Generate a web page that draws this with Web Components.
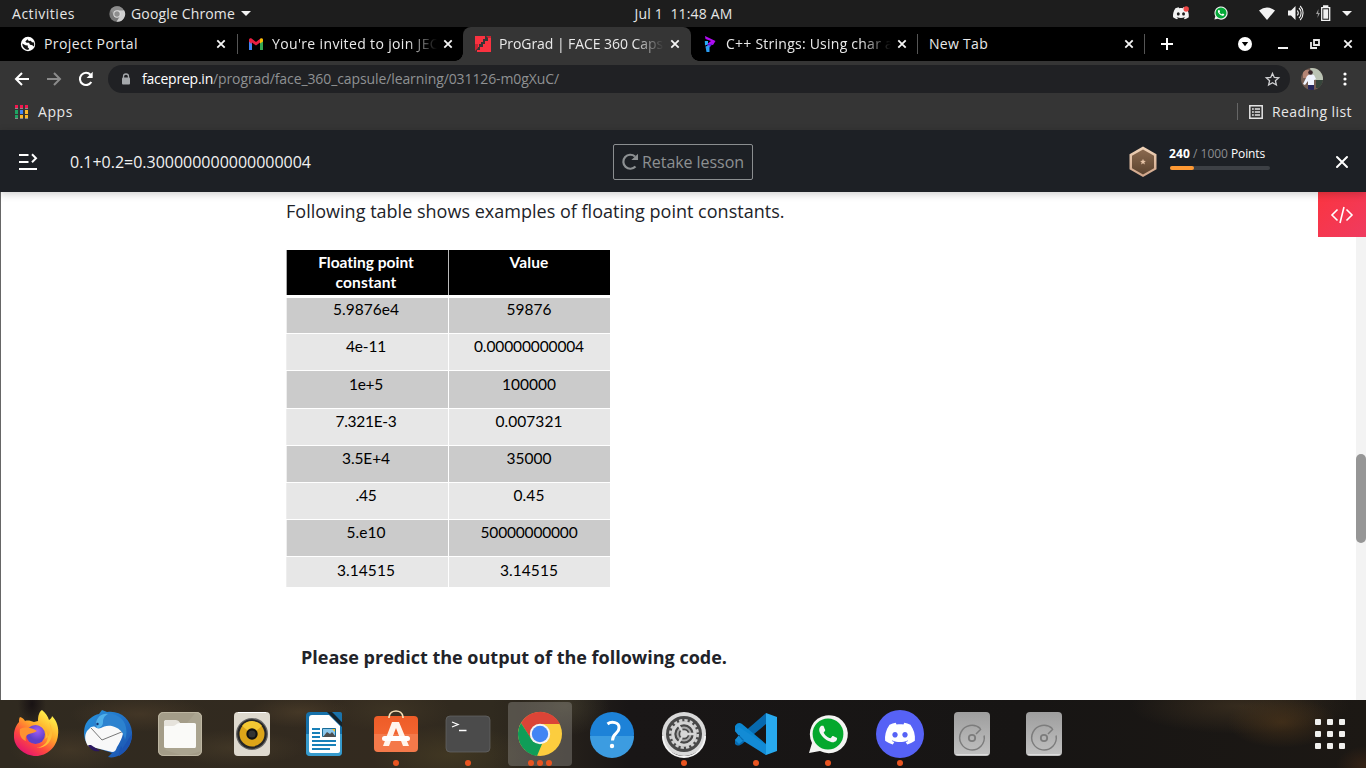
<!DOCTYPE html>
<html lang="en">
<head>
<meta charset="utf-8">
<title>ProGrad | FACE 360 Capsule</title>
<style>
html,body{margin:0;height:100%;overflow:hidden;background:#000}
</style>
</head>
<body>
<desktop-shell></desktop-shell>
<script>
const define = (name, html, setup) => {
  const tpl = document.createElement('template');
  tpl.innerHTML = html;
  customElements.define(name, class extends HTMLElement {
    connectedCallback() {
      if (this.shadowRoot) return;
      this.attachShadow({mode: 'open'}).appendChild(tpl.content.cloneNode(true));
      if (setup) setup(this, this.shadowRoot);
    }
  });
};

const DISCORD = 'M20.317 4.3698a19.7913 19.7913 0 00-4.8851-1.5152.0741.0741 0 00-.0785.0371c-.211.3753-.4447.8648-.6083 1.2495-1.8447-.2762-3.68-.2762-5.4868 0-.1636-.3933-.4058-.8742-.6177-1.2495a.077.077 0 00-.0785-.037 19.7363 19.7363 0 00-4.8852 1.515.0699.0699 0 00-.0321.0277C.5334 9.0458-.319 13.5799.0992 18.0578a.0824.0824 0 00.0312.0561c2.0528 1.5076 4.0413 2.4228 5.9929 3.0294a.0777.0777 0 00.0842-.0276c.4616-.6304.8731-1.2952 1.226-1.9942a.076.076 0 00-.0416-.1057c-.6528-.2476-1.2743-.5495-1.8722-.8923a.077.077 0 01-.0076-.1277c.1258-.0943.2517-.1923.3718-.2914a.0743.0743 0 01.0776-.0105c3.9278 1.7933 8.18 1.7933 12.0614 0a.0739.0739 0 01.0785.0095c.1202.099.246.1981.3728.2924a.077.077 0 01-.0066.1276 12.2986 12.2986 0 01-1.873.8914.0766.0766 0 00-.0407.1067c.3604.698.7719 1.3628 1.225 1.9932a.076.076 0 00.0842.0286c1.961-.6067 3.9495-1.5219 6.0023-3.0294a.077.077 0 00.0313-.0552c.5004-5.177-.8382-9.6739-3.5485-13.6604a.061.061 0 00-.0312-.0286zM8.02 15.3312c-1.1825 0-2.1569-1.0857-2.1569-2.419 0-1.3332.9555-2.4189 2.157-2.4189 1.2108 0 2.1757 1.0952 2.1568 2.419 0 1.3332-.9555 2.4189-2.1569 2.4189zm7.9748 0c-1.1825 0-2.1569-1.0857-2.1569-2.419 0-1.3332.9554-2.4189 2.1569-2.4189 1.2108 0 2.1757 1.0952 2.1568 2.419 0 1.3332-.946 2.4189-2.1568 2.4189Z';
const PHONE = 'M17.472 14.382c-.297-.149-1.758-.867-2.03-.967-.273-.099-.471-.148-.67.15-.197.297-.767.966-.94 1.164-.173.199-.347.223-.644.075-.297-.15-1.255-.463-2.39-1.475-.883-.788-1.48-1.761-1.653-2.059-.173-.297-.018-.458.13-.606.134-.133.298-.347.446-.52.149-.174.198-.298.298-.497.099-.198.05-.371-.025-.52-.075-.149-.669-1.612-.916-2.207-.242-.579-.487-.5-.669-.51-.173-.008-.371-.01-.57-.01-.198 0-.52.074-.792.372-.272.297-1.04 1.016-1.04 2.479 0 1.462 1.065 2.875 1.213 3.074.149.198 2.096 3.2 5.077 4.487.709.306 1.262.489 1.694.625.712.227 1.36.195 1.871.118.571-.085 1.758-.719 2.006-1.413.248-.694.248-1.289.173-1.413-.074-.124-.272-.198-.57-.347z';

/* small icons: [width, height, markup] */
const ICONS = {
  chromeGray: [16,16,'<circle cx="8" cy="8" r="7.7" fill="#777"/><path d="M8 4h7a7.7 7.7 0 0 1-7.5 11.7L11 10z" fill="#cfcfcf"/><path d="M1.5 4A7.7 7.7 0 0 1 15 4.6H8L5 10z" fill="#8c8c8c"/><circle cx="8" cy="8" r="3.7" fill="#ddd"/><circle cx="8" cy="8" r="2.7" fill="#8e8e8e"/>'],
  caret: [10,5,'<path d="M0 0h10L5 5z" fill="#f2f2f2"/>'],
  discord: [16,14,'<g transform="translate(0 -.6) scale(.66)"><path d="'+DISCORD+'" fill="#f2f2f2"/></g><circle cx="13.2" cy="3" r="2.7" fill="#f04747"/>'],
  whatsapp: [14,14,'<path d="M.4 13.6l.9-3.3A6.6 6.6 0 1 1 3.800 12.800z" fill="#f0f0f0"/><circle cx="7" cy="6.900" r="5.500" fill="#05a838"/><g transform="translate(.8 .6) scale(.52)"><path d="'+PHONE+'" fill="#fff"/></g>'],
  wifi: [16,13,'<path d="M0 3.500Q8-2.500 16 3.500L8 13z" fill="#f2f2f2"/>'],
  volume: [17,16,'<path d="M1 5.500h3L8.500 1v14L4 10.500H1z" fill="#f2f2f2"/><path d="M10.300 5.500a4 4 0 0 1 0 5M12 3a7 7 0 0 1 0 10M13.200 1a10 10 0 0 1 0 14" fill="none" stroke="#f2f2f2" stroke-width="1.100"/>'],
  battery: [16,16,'<path d="M3.500 4L1 9h2l-.6 4L5 8H3.200z" fill="#9a9a9a"/><path d="M6.700 2.700h8v12.600h-8zM8.700 1h4v1.500h-4z" fill="none" stroke="#f2f2f2" stroke-width="1.300"/><path d="M8.300 4.300h4.900v9.400H8.300z" fill="#f2f2f2"/>'],
  globe: [16,16,'<circle cx="8" cy="8" r="7.200" fill="#fff"/><path d="M2.200 7.600L5.500 9.200l2.300.3v2l1.200.8-.6 1.600A6.200 6.200 0 0 1 2.200 7.600z" fill="#111"/><path d="M7.500 3.200L5.300 5.400l1.200 1.300H9l1 2 2.400.6 1.300 1.200a6 6 0 0 0 .3-4l-2-.3-1.200-1.400-2 .3z" fill="#111"/>'],
  gmail: [16,12,'<path d="M1 12V2l3 2.200V12z" fill="#4285f4"/><path d="M15 12V2l-3 2.200V12z" fill="#34a853"/><path d="M1 3.500V1.700C1 .3 2.600-.3 3.600.5L8 3.900 12.400.5v3.800L8 7.600 3.600 4.300v2z" fill="#ea1e40"/><path d="M12 5.500V.8C13.300-.3 15 .3 15 1.700v1.700z" fill="#fbbc04"/>'],
  prograd: [16,16,'<path d="M0 0h10v3H8v3H6v2H4v3H0zM16 0v16H2v-2h3v-3h3V8h2V5h3V2h1V0z" fill="#fa3240"/><path d="M0 8h3v4l-3 3z" fill="#c92331"/><path d="M11 0h5v2h-3z" fill="#c92331"/>'],
  cpp: [12,16,'<path d="M1 0l10.500 5L9 9 3 8.300 7 5 1.500 3z" fill="#b20cf2"/><path d="M.8 5H4v3.500L1 9.500z" fill="#27aef5"/><path d="M3 8.500l6-1-3 3.500-2 .7z" fill="#6b16de"/><path d="M1.500 10.500L5.500 9v7h-3z" fill="#2a9df4"/>'],
  close: [10,10,'<path d="M1.300 1.300l7.400 7.400M8.700 1.300L1.300 8.700" stroke="#f5f5f5" stroke-width="1.800"/>'],
  plus: [12,12,'<path d="M6 0v12M0 6h12" stroke="#fff" stroke-width="2"/>'],
  tabsearch: [14,14,'<circle cx="7" cy="7" r="7" fill="#fff"/><path d="M3.800 5h6.400L7 9.300z" fill="#000"/>'],
  minimize: [10,2,'<path d="M0 0h10v2H0z" fill="#f1f1f1"/>'],
  restore: [10,10,'<path d="M1 3v6h6M4 1h5v5H4z" stroke="#e5e5e5" stroke-width="1.800" fill="none"/>'],
  back: [16,14,'<path d="M15 7H2M8 1L2 7l6 6" fill="none" stroke="#fff" stroke-width="2"/>'],
  forward: [16,14,'<path d="M1 7h13M8 1l6 6-6 6" fill="none" stroke="#8b8b8b" stroke-width="2"/>'],
  reload: [16,16,'<path d="M13.300 11A6.100 6.100 0 1 1 12.500 3.700" fill="none" stroke="#fff" stroke-width="2.100"/><path d="M14.700.800v6.100H8.600z" fill="#fff"/>'],
  lock: [10,12,'<path d="M2.500 5V3.500a2.500 2.500 0 0 1 5 0V5" fill="none" stroke="#a5a8ab" stroke-width="1.300"/><rect x="1" y="4.500" width="8" height="7" rx="1" fill="#a5a8ab"/>'],
  star: [15,14,'<path d="M7.500 1.400l1.800 4 4.400.4-3.300 2.900 1 4.300-3.900-2.300-3.900 2.300 1-4.300L1.300 5.800l4.400-.4z" fill="none" stroke="#d0d1d3" stroke-width="1.300"/>'],
  kebab: [4,14,'<g fill="#fff"><circle cx="2" cy="2" r="1.600"/><circle cx="2" cy="7" r="1.600"/><circle cx="2" cy="12" r="1.600"/></g>'],
  apps: [13,14,'<path d="M0 0h3v3H0zM5 0h3v3H5zM10 0h3v3h-3z" fill="#f2184f"/><path d="M0 5h3v4H0zM0 10h3v3H0z" fill="#1fa463"/><path d="M5 5h3v4H5z" fill="#4285f4"/><path d="M10 5h3v4h-3zM5 10h3v3H5zM10 10h3v3h-3z" fill="#fbb829"/><path d="M0 3h3v1H0zM5 3h3v1H5zM10 3h3v1h-3zM0 13h3v1H0zM5 13h3v1H5zM10 13h3v1h-3z" fill="#8a8a8a"/>'],
  reading: [14,14,'<path d="M.8.800h12.400v12.400H.8z" fill="none" stroke="#e4e4e4" stroke-width="1.500"/><path d="M3 4.100h1.800M3 7h1.800M3 9.900h1.800M5.800 4.100H11M5.800 7H11M5.800 9.900H11" stroke="#e4e4e4" stroke-width="1.500"/>'],
  menu: [20,18,'<path d="M0 2h9.500M0 9h9.500M0 16h18" stroke="#fff" stroke-width="2"/><path d="M13 1.300l4 4-4 4" fill="none" stroke="#fff" stroke-width="2"/>'],
  retake: [17,18,'<path d="M13.500 13.500A7 7 0 1 1 13 3.500" fill="none" stroke="#8d9092" stroke-width="2.200"/><path d="M16 .800V7H9.300z" fill="#8d9092"/>'],
  badge: [28,32,'<defs><linearGradient id="a" x2="0" y2="1"><stop stop-color="#f0d3b8"/><stop offset="1" stop-color="#cfa489"/></linearGradient><linearGradient id="b" x2="0" y2="1"><stop stop-color="#8a694f"/><stop offset="1" stop-color="#5c432f"/></linearGradient></defs><path d="M14 .5l13.500 7.700v15L14 31 .5 23.200v-15z" fill="url(#a)"/><path d="M14 3.500l11 6.200v12.600L14 28.500 3 22.300V9.700z" fill="url(#b)"/><path d="M14 12.800l.8 2 2.100.1-1.600 1.400.6 2.100-1.900-1.200-1.900 1.200.6-2.100-1.600-1.400 2.100-.1z" fill="#e6c3a6"/>'],
  bigclose: [12,12,'<path d="M1 1l10 10M11 1L1 11" stroke="#fff" stroke-width="2" stroke-linecap="round"/>'],
  code: [22,18,'<path d="M6.500 3.500L1 9l5.500 5.500M15.500 3.500L21 9l-5.500 5.500M13 1L9 17" fill="none" stroke="#fff" stroke-width="1.600"/>'],
  avatar: [22,22,'<defs><clipPath id="c"><circle cx="11" cy="11" r="11"/></clipPath></defs><g clip-path="url(#c)"><path d="M0 0h22v22H0z" fill="#735c52"/><path d="M9 0h13v12H12z" fill="#bac3b4"/><path d="M2 2h6v8H2z" fill="#b48474"/><path d="M15 12h7v8h-7z" fill="#36453b"/><path d="M6 8l3-2 4 1 2 4-2 1v6H7v-5l-3 4-2-1z" fill="#f0f4ff"/><circle cx="9.500" cy="4.500" r="2.300" fill="#38262a"/><path d="M7 17h6v5H7z" fill="#25265c"/></g>']
};
const DOCK = {
  firefox: '<defs><linearGradient id="f" x1=".8" y1=".1" x2=".2" y2="1"><stop stop-color="#fff04a"/><stop offset=".35" stop-color="#ffa92a"/><stop offset=".65" stop-color="#ff4a3e"/><stop offset="1" stop-color="#e00b78"/></linearGradient><radialGradient id="p" cx=".6" cy=".3"><stop stop-color="#a05cf5"/><stop offset="1" stop-color="#6040c8"/></radialGradient></defs><path d="M42 10c4 3 6 7 7 10 2-1 3-3 3-4 5 5 7 12 6 19-1 12-11 21-22 21S13 47 14 35c0-6 3-11 5-13 0-2 0-4 1-5 3 1 4 2 5 4 3-1 6 0 9 1l4-1c0-5 1-9 4-11z" fill="url(#f)"/><circle cx="35.500" cy="34.500" r="9.500" fill="url(#p)"/><path d="M20 29c6-3 12-1 17 2-3 2-6 2-8 3-3 1-4 4-3 7-5-2-7-6-6-12z" fill="#ff9230"/><path d="M37 24c8 2 11 9 8 15 5-3 7-9 4-17 7 12 2 26-13 26 14-2 17-16 1-24z" fill="#ffbd36"/>',
  thunderbird: '<defs><linearGradient id="t" x2="1" y2="1"><stop stop-color="#2796df"/><stop offset="1" stop-color="#1b4fae"/></linearGradient></defs><path d="M27 14l3-4 5 2c13-2 24 7 25 20 1 9-4 19-12 23-4 2-8 3-12 2l4-4L16 45c-4-5-5-12-3-19 2-6 8-11 14-12z" fill="url(#t)"/><path d="M15 31l4-4 26-5 7 3c0 9-3 16-7 22-1 3-2 5-5 5L16 46c-3-5-4-10-1-15z" fill="#f8f8f8"/><path d="M19 28l11 12 22-9" fill="none" stroke="#777" stroke-width="1"/><path d="M22 26c-1-7 5-13 12-13 9 0 16 4 19 11 2 5 2 11 0 16-1-6-4-10-8-12-7-4-13-2-16 0-3 1-5 0-7-2z" fill="#2c82cf"/><path d="M24 23c1-6 6-10 12-9-4 2-5 5-5 8 0 4-3 6-6 6z" fill="#4fb0ea"/><circle cx="25.500" cy="24" r="1.200" fill="#163370"/><path d="M60 34c0 9-5 17-13 22 0-5 1-7 2-10 1 1 1 2 1 3 4-5 6-10 10-15z" fill="#1b54b2"/><path d="M16 45c3 6 8 7 12 6l-9-6z" fill="#2b1760"/>',
  files: '<rect x="14" y="12" width="44" height="44" rx="5" fill="#a49d89"/><path d="M52 12a6 6 0 0 1 6 6v33L40 56 21 50z" fill="#aaa490"/><path d="M20 22c0-1 1-2 2-2h9l5 3h14c2 0 2 1 2 2v21c0 2-1 2-2 2H22c-2 0-2-1-2-2z" fill="#fafaf8"/><path d="M20 27V22c0-1 1-2 2-2h9c3 0 4 1 5 3-4 0-4 3-7 3h-7c-1 0-2 0-2 1z" fill="#e6e3dc"/><rect x="14.500" y="12.500" width="43" height="43" rx="5" fill="none" stroke="#c4bda8" stroke-width=".8"/>',
  rhythmbox: '<rect x="18" y="12" width="36" height="44" rx="4" fill="#ded9ce"/><path d="M22 12.500h28" stroke="#fff"/><circle cx="36" cy="34" r="16" fill="#656565"/><circle cx="36" cy="34" r="14.700" fill="#262626"/><circle cx="36" cy="34" r="12.500" fill="#dda519"/><path d="M26 26a12.500 12.500 0 0 1 20 0L36 34z" fill="#f3c833"/><circle cx="36" cy="34" r="5.700" fill="#111"/><circle cx="36" cy="34" r="3.600" fill="#333"/>',
  writer: '<rect x="18" y="12" width="36" height="44" rx="4" fill="#1671aa"/><path d="M18 34h36v18a4 4 0 0 1-4 4H22a4 4 0 0 1-4-4z" fill="#379bcd"/><path d="M24 15h17l11 11v25c0 1-1 2-2 2H23c-1 0-2-1-2-2V18c0-2 1-3 3-3z" fill="#fff"/><path d="M39 12h5l10 10v5z" fill="#15232b"/><path d="M45 12h7a2 2 0 0 1 2 2v8z" fill="#1b73ab"/><path d="M24 29h8M24 33h8M24 37h8M24 41h24M24 45h24M24 49h18" stroke="#1880b8" stroke-width="2"/><path d="M34.500 28.500h13v8h-13z" fill="#8bc7eb" stroke="#176b97"/><path d="M35 37l4-5 3 2 2-2 4 5z" fill="#4e4e4e"/><path d="M44 29h3v3z" fill="#f6bf24"/>',
  software: '<defs><linearGradient id="s" x2="0" y2="1"><stop stop-color="#ee5c27"/><stop offset=".5" stop-color="#f26430"/><stop offset=".51" stop-color="#f4794a"/><stop offset="1" stop-color="#f4794a"/></linearGradient></defs><rect x="14" y="16" width="44" height="36" rx="4" fill="url(#s)"/><path d="M29 18v-1c1-8 13-8 14 0v1" fill="none" stroke="#f7dfb7" stroke-width="1.700"/><path d="M32 22h7l10 24h-6l-7-18-7 18h-6z" fill="#fff5ed"/><rect x="22" y="36" width="28" height="5" rx="2.500" fill="#fff"/>',
  terminal: '<rect x="14" y="16" width="44" height="36" rx="4" fill="#4b4b4b" stroke="#686868" stroke-width=".7"/><path d="M20 22l6 2.500-6 2.500" fill="none" stroke="#fff" stroke-width="1.300"/><path d="M27 30.500h7.500" stroke="#fff" stroke-width="1.500"/>',
  chrome: '<rect x="4" y="2" width="64" height="64" rx="4" fill="#9c9894" opacity=".38"/><circle cx="36" cy="34" r="22" fill="#fccd3e"/><path d="M17 23A22 22 0 0 1 56 24H36l-9.500 14z" fill="#db4437"/><path d="M17 23l11 17 10 4-5 12A22 22 0 0 1 17 23z" fill="#109d58"/><circle cx="36" cy="34" r="10.200" fill="#f4f4f4"/><circle cx="36" cy="34" r="8.200" fill="#4285f4"/>',
  help: '<circle cx="36" cy="34" r="22" fill="#1d82d8"/><path d="M14 36h44a22 22 0 0 1-44 0z" fill="#3c9ce1"/><path d="M31.500 24c4-3 12-2 11.500 4 0 6-6.500 5-6.500 12.500" fill="none" stroke="#fff" stroke-width="3"/><circle cx="36" cy="46" r="2.200" fill="#fff"/>',
  settings: '<circle cx="36" cy="34" r="22" fill="#d9d9d9"/><path d="M15 36a21 21 0 0 0 42 0" fill="none" stroke="#f5f5f5" stroke-width="2"/><circle cx="36" cy="34" r="18" fill="#484848"/><circle cx="36" cy="34" r="13.700" fill="none" stroke="#cfcfcf" stroke-width="2.600" stroke-dasharray="3.250 2.130"/><circle cx="36" cy="34" r="11.200" fill="none" stroke="#d4d4d4" stroke-width="3"/><circle cx="36" cy="34" r="6.500" fill="none" stroke="#aaa" stroke-width="2"/><circle cx="36" cy="34" r="3.800" fill="#d7d7d7"/><path d="M38 34h8M34 31l-4-7M34 37l-4 7" stroke="#d7d7d7" stroke-width="2.300"/>',
  vscode: '<path d="M15 40v4c3 3 5 1 7 0L46 24V13z" fill="#0769ae"/><path d="M15 28v-2c3-4 5-3 7-2l24 20v11L15 31z" fill="#0b86d0"/><path d="M46 13l11 4v34l-11 4z" fill="#28a9ee"/><path d="M15 40l4 4 5-4-5-5zM22 40l-7-9 4-4 27 18v10z" fill="#138bd5"/>',
  whatsapp: '<path d="M17 53l3-10A19 19 0 1 1 28 51z" fill="#f4f4f2"/><circle cx="36" cy="34" r="15.400" fill="#04a82d"/><g transform="translate(18.300 16.200) scale(1.480)"><path d="'+PHONE+'" fill="#f6f6f6"/></g>',
  discord: '<circle cx="36" cy="34" r="24" fill="#5662f6"/><g transform="translate(21 19.500) scale(1.250 1.180)"><path d="'+DISCORD+'" fill="#fff"/></g>',
  disk: '<defs><linearGradient id="d" x2="0" y2="1"><stop stop-color="#9e9e9e"/><stop offset="1" stop-color="#c1c1c1"/></linearGradient></defs><rect x="18" y="12" width="36" height="44" rx="4" fill="url(#d)"/><path d="M20 54.500h32" stroke="#ddd"/><path d="M44.500 28.800A12.300 12.300 0 1 0 48.100 35.500M40 34l5-5" fill="none" stroke="#7c7c7c" stroke-width="1.500"/><circle cx="36" cy="38" r="3.200" fill="none" stroke="#7c7c7c" stroke-width="1.800"/>'
};

define('ui-icon', `<style>:host{display:block;flex:none;line-height:0}svg{display:block;overflow:visible}</style>`, (host, root) => {
  const [w, h, m] = ICONS[host.getAttribute('name')];
  root.innerHTML += `<svg width="${w}" height="${h}" viewBox="0 0 ${w} ${h}">${m}</svg>`;
});

define('top-bar', `<style>
:host{display:grid;grid-template-columns:1fr auto 1fr;align-items:center;height:27px;background:#1d1d1d;color:#e6e6e6;font-size:14px}
.l{display:flex;align-items:center;padding-left:12px}.l ui-icon:nth-of-type(1){margin:0 6px 0 34px}.l ui-icon:nth-of-type(2){margin-left:6px}
.c{padding-left:1px;margin-top:-1px}
.r{display:flex;align-items:center;justify-content:flex-end;padding-right:16px;margin-top:-1px}
</style><div class="l"><fit-text width="63">Activities</fit-text><ui-icon name="chromeGray"></ui-icon><fit-text width="104">Google Chrome</fit-text><ui-icon name="caret"></ui-icon></div>
<div class="c"><fit-text width="98">Jul 1&nbsp; 11:48 AM</fit-text></div>
<div class="r"><ui-icon name="discord"></ui-icon><ui-icon name="whatsapp" style="margin-left:25px"></ui-icon><ui-icon name="wifi" style="margin-left:31px"></ui-icon><ui-icon name="volume" style="margin-left:12px"></ui-icon><ui-icon name="battery" style="margin-left:11px"></ui-icon><ui-icon name="caret" style="margin-left:11px;margin-right:-2px"></ui-icon></div>`);

define('browser-tab', `<style>
:host{display:flex;align-items:center;box-sizing:border-box;height:34px;padding-right:11px;position:relative;flex:none;color:#e9e9e9;font-size:14px}
:host([sep])::after{content:"";position:absolute;right:0;top:7px;width:1px;height:20px;background:#555}
:host([active]){background:#353535;border-radius:8px 8px 0 0}
:host([active])::before,:host([active])::after{content:"";position:absolute;bottom:0;width:8px;height:8px}
:host([active])::before{left:-8px;background:radial-gradient(circle at 0 0,transparent 7.5px,#353535 8px)}
:host([active])::after{right:-8px;background:radial-gradient(circle at 100% 0,transparent 7.5px,#353535 8px)}
.t{flex:1;overflow:hidden;white-space:nowrap;margin-top:-1px}
:host([fade]) .t{-webkit-mask:linear-gradient(90deg,#000 calc(100% - 30px),transparent 100%);margin-right:6px}
</style><div class="t"><slot></slot></div><ui-icon name="close"></ui-icon>`, (host, root) => {
  if (!host.hasAttribute('icon')) return;
  const icon = document.createElement('ui-icon');
  icon.setAttribute('name', host.getAttribute('icon'));
  icon.style.width = host.getAttribute('icon-cell') + 'px';
  root.insertBefore(icon, root.querySelector('.t'));
});

define('tab-strip', `<style>:host{display:flex;height:34px;background:#000;align-items:center}
.w{flex:1;display:flex;align-items:center;padding-left:16px}</style>
<browser-tab sep icon="globe" icon-cell="24" style="width:238px;padding-left:20px;padding-right:12px"><fit-text width="94">Project Portal</fit-text></browser-tab>
<browser-tab fade icon="gmail" icon-cell="24" style="width:225px;padding-left:10px;padding-right:10px"><fit-text width="167">You're invited to join JEC</fit-text></browser-tab>
<browser-tab active fade icon="prograd" icon-cell="24" style="width:228px;padding-left:12px"><fit-text width="164">ProGrad | FACE 360 Caps</fit-text></browser-tab>
<browser-tab sep fade icon="cpp" icon-cell="22" style="width:227px;padding-left:13px"><fit-text width="167">C++ Strings: Using char a</fit-text></browser-tab>
<browser-tab sep style="width:227px;padding-left:11px"><fit-text width="59">New Tab</fit-text></browser-tab>
<div class="w"><ui-icon name="plus"></ui-icon><ui-icon name="tabsearch" style="margin-left:65px"></ui-icon><ui-icon name="minimize" style="margin:8px 0 0 26px"></ui-icon><ui-icon name="restore" style="margin-left:22px"></ui-icon><ui-icon name="close" style="margin-left:23px"></ui-icon></div>`);

define('browser-toolbar', `<style>
:host{display:block;height:69px;background:#353535;color:#e8e8e8;font-size:14px}
.a{display:flex;align-items:center;height:36px;padding-left:14px}
.url{display:flex;align-items:center;flex:none;box-sizing:border-box;width:1182px;height:28px;border-radius:14px;background:#202124;margin:0 11px 0 14px;padding:0 10px 0 13px;color:#fff}
.url fit-text{position:relative;top:-1px}
.path{color:#8f9193;flex:1}
.b{display:flex;align-items:center;height:28px;padding:0 14px 0 15px}
.b ui-icon{margin-top:2px}
.sep{width:1px;height:17px;background:#666;margin:1px 11px 0 auto}
</style>
<div class="a"><ui-icon name="back"></ui-icon><ui-icon name="forward" style="margin-left:16px"></ui-icon><ui-icon name="reload" style="margin-left:16px"></ui-icon>
<div class="url"><ui-icon name="lock"></ui-icon><fit-text width="71" style="margin-left:11px">faceprep.in</fit-text><div class="path"><fit-text width="346">/prograd/face_360_capsule/learning/031126-m0gXuC/</fit-text></div><ui-icon name="star"></ui-icon></div>
<ui-icon name="avatar"></ui-icon><ui-icon name="kebab" style="margin-left:20px"></ui-icon></div>
<div class="b"><ui-icon name="apps"></ui-icon><fit-text width="35" style="margin-left:10px">Apps</fit-text><div class="sep"></div><ui-icon name="reading"></ui-icon><fit-text width="80" style="margin-left:9px">Reading list</fit-text></div>`);

define('lesson-header', `<style>
:host{display:grid;grid-template-columns:613px 140px 1fr;align-items:center;height:62px;padding-top:2px;background:#1d2025;color:#fff;position:relative;box-shadow:0 2px 8px rgba(0,0,0,.2);box-sizing:border-box}
.l,.r{display:flex;align-items:center}.l{padding-left:19px;color:#f1f1f1;font-size:16px}
.btn{display:flex;align-items:center;box-sizing:border-box;height:36px;border:1px solid #8b8e90;border-radius:2px;padding-left:8px;color:#8d9092;font-size:16px}
.r{padding:0 18px 0 376px;justify-content:space-between}
.pts{display:flex;gap:12px;align-items:center}.pts>div{margin-top:-9px}
.n{display:flex;font-size:12px;white-space:pre}.n span{color:#8b8d90}
.bar{width:100px;height:4px;border-radius:2px;background:#3d4045;margin:4px 0 0 1px}.bar i{display:block;width:24px;height:4px;border-radius:2px;background:#ff9933}
</style>
<div class="l"><ui-icon name="menu"></ui-icon><fit-text width="241" style="margin-left:31px">0.1+0.2=0.300000000000000004</fit-text></div>
<div class="btn"><ui-icon name="retake"></ui-icon><fit-text width="102" style="margin-left:3px">Retake lesson</fit-text></div>
<div class="r"><div class="pts"><ui-icon name="badge"></ui-icon><div><div class="n"><fit-text width="21" style="font-weight:700">240</fit-text><span><fit-text width="41"> / 1000 </fit-text></span><fit-text width="34">Points</fit-text></div><div class="bar"><i></i></div></div></div><ui-icon name="bigclose"></ui-icon></div>`);

define('data-table', `<style>
:host{display:block;width:324px;font-family:Lato,sans-serif;font-size:15.500px;line-height:20px;color:#000;text-align:center}
.row{display:grid;grid-template-columns:161px 161px;column-gap:1px;margin-bottom:1px;border-left:1px solid #eee}
.row>div{background:#cbcbcb;box-sizing:border-box;padding-right:1px}
.row>div:first-child{padding-right:3px}
.row.e>div{background:#e7e7e7}
.row.h{margin-bottom:3px;height:45px;font-weight:700;color:#fff;border-left-color:#aaa;background:#bbb}
.row.h>div{background:#000;padding-top:2px}
</style>`, (host, root) => {
  const rows = [['5.9876e4',66,'59876',45,35,1],['4e-11',40,'0.00000000004',110,36,2],['1e+5',34,'100000',54,37,3],['7.321E-3',61,'0.007321',67,36,2],['3.5E+4',48,'35000',45,36,2],['.45',21,'0.45',31,36,2],['5.e10',39,'50000000000',97,36,2],['3.14515',58,'3.14515',58,30,3]];
  root.innerHTML += '<div class="row h"><div><fit-text width="96">Floating point</fit-text><br><fit-text width="61">constant</fit-text></div><div><fit-text width="39">Value</fit-text></div></div>' +
    rows.map(([a, aw, b, bw, h, p], i) => `<div class="row${i % 2 ? ' e' : ''}" style="height:${h}px"><div style="padding-top:${p}px"><fit-text width="${aw}">${a}</fit-text></div><div style="padding-top:${p}px"><fit-text width="${bw}">${b}</fit-text></div></div>`).join('');
});

define('lesson-page', `<style>
:host{display:flex;height:508px;background:#fff;box-sizing:border-box;border-left:1px solid #666;color:#212329;font-size:18px}
.main{flex:1;padding:6px 0 0 285px}
p{margin:0;line-height:26px}
data-table{margin:26px 0 0}
.q{font-weight:700;margin:57px 0 0 15px}
.side{width:48px;display:flex;flex-direction:column;align-items:flex-end}
.code{width:48px;height:45px;background:linear-gradient(135deg,#fb3440,#ef3b60);display:flex;align-items:center;justify-content:center}
.track{width:10px;flex:1;background:#f3f3f3;box-sizing:border-box;padding-top:217px}
.thumb{height:89px;border-radius:5px;background:#969696}
</style>
<div class="main"><p><fit-text width="498.500">Following table shows examples of floating point constants.</fit-text></p><data-table></data-table><p class="q"><fit-text width="426">Please predict the output of the following code.</fit-text></p></div>
<div class="side"><div class="code"><ui-icon name="code"></ui-icon></div><div class="track"><div class="thumb"></div></div></div>`);

define('dock-item', `<style>:host{display:block;position:relative;width:72px;height:68px;flex:none}svg{display:block}
.dots{position:absolute;left:0;right:0;top:60px;display:flex;justify-content:center;gap:2.700px}.dots i{width:6px;height:6px;border-radius:50%;background:#e95420}</style>`, (host, root) => {
  root.innerHTML += `<svg width="72" height="68" viewBox="0 0 72 68">${DOCK[host.getAttribute('app')]}</svg><div class="dots">${'<i></i>'.repeat(+host.getAttribute('windows') || 0)}</div>`;
});

define('app-dock', `<style>
:host{display:flex;height:68px;background:
radial-gradient(ellipse 55px 26px at 1282px 22px,rgba(82,56,26,.6),transparent),
radial-gradient(ellipse 110px 28px at 1240px 6px,rgba(66,52,34,.7),transparent),
radial-gradient(ellipse 30px 20px at 1366px 66px,rgba(70,42,22,.6),transparent),
radial-gradient(ellipse 45px 30px at 565px 6px,rgba(90,85,60,.4),transparent),
radial-gradient(ellipse 80px 30px at 450px 55px,rgba(80,68,38,.5),transparent),
radial-gradient(ellipse 60px 22px at 390px 10px,rgba(70,60,40,.5),transparent),
radial-gradient(ellipse 50px 16px at 300px 12px,rgba(88,70,46,.5),transparent),
radial-gradient(ellipse 70px 18px at 235px 48px,rgba(74,62,42,.6),transparent),
radial-gradient(ellipse 70px 18px at 140px 14px,rgba(78,62,42,.6),transparent),
radial-gradient(ellipse 60px 22px at 70px 50px,rgba(76,62,42,.6),transparent),
radial-gradient(ellipse 14px 22px at 32px 4px,rgba(18,12,16,.8),transparent),
linear-gradient(90deg,#302a20,#332a1f 28%,#302a1f 36%,#241f1a 42%,#191616 46%,#171514 75%,#1c1814)}
.grid{margin:19px 21px 0 auto;display:grid;grid-template-columns:repeat(3,6px);grid-auto-rows:6px;gap:6px;align-content:start}
.grid i{background:#f0f0ee;border-radius:1px}
</style><dock-item app="firefox"></dock-item><dock-item app="thunderbird"></dock-item><dock-item app="files"></dock-item><dock-item app="rhythmbox"></dock-item><dock-item app="writer"></dock-item><dock-item app="software" windows="1"></dock-item><dock-item app="terminal" windows="1"></dock-item><dock-item app="chrome" windows="3"></dock-item><dock-item app="help"></dock-item><dock-item app="settings" windows="1"></dock-item><dock-item app="vscode" windows="1"></dock-item><dock-item app="whatsapp" windows="1"></dock-item><dock-item app="discord" windows="1"></dock-item><dock-item app="disk"></dock-item><dock-item app="disk"></dock-item>
<div class="grid"><i></i><i></i><i></i><i></i><i></i><i></i><i></i><i></i><i></i></div>`);

define('desktop-shell', `<style>:host{display:flex;flex-direction:column;width:1366px;height:768px;overflow:hidden;font-family:"Open Sans","Noto Sans",sans-serif}
:host>*{flex:none}</style><top-bar></top-bar><tab-strip></tab-strip><browser-toolbar></browser-toolbar><lesson-header></lesson-header><lesson-page></lesson-page><app-dock></app-dock>`);

/* one line of text tracked out to a given width; defined last so its fonts are already inherited */
define('fit-text', `<style>:host{display:inline-block;white-space:pre;flex:none}span{display:inline-block}</style><span><slot></slot></span>`, (host, root) => {
  const target = +host.getAttribute('width'), span = root.querySelector('span');
  const n = host.textContent.length;
  span.style.letterSpacing = (target - span.getBoundingClientRect().width) / n + 'px';
});
</script>
</body>
</html>
